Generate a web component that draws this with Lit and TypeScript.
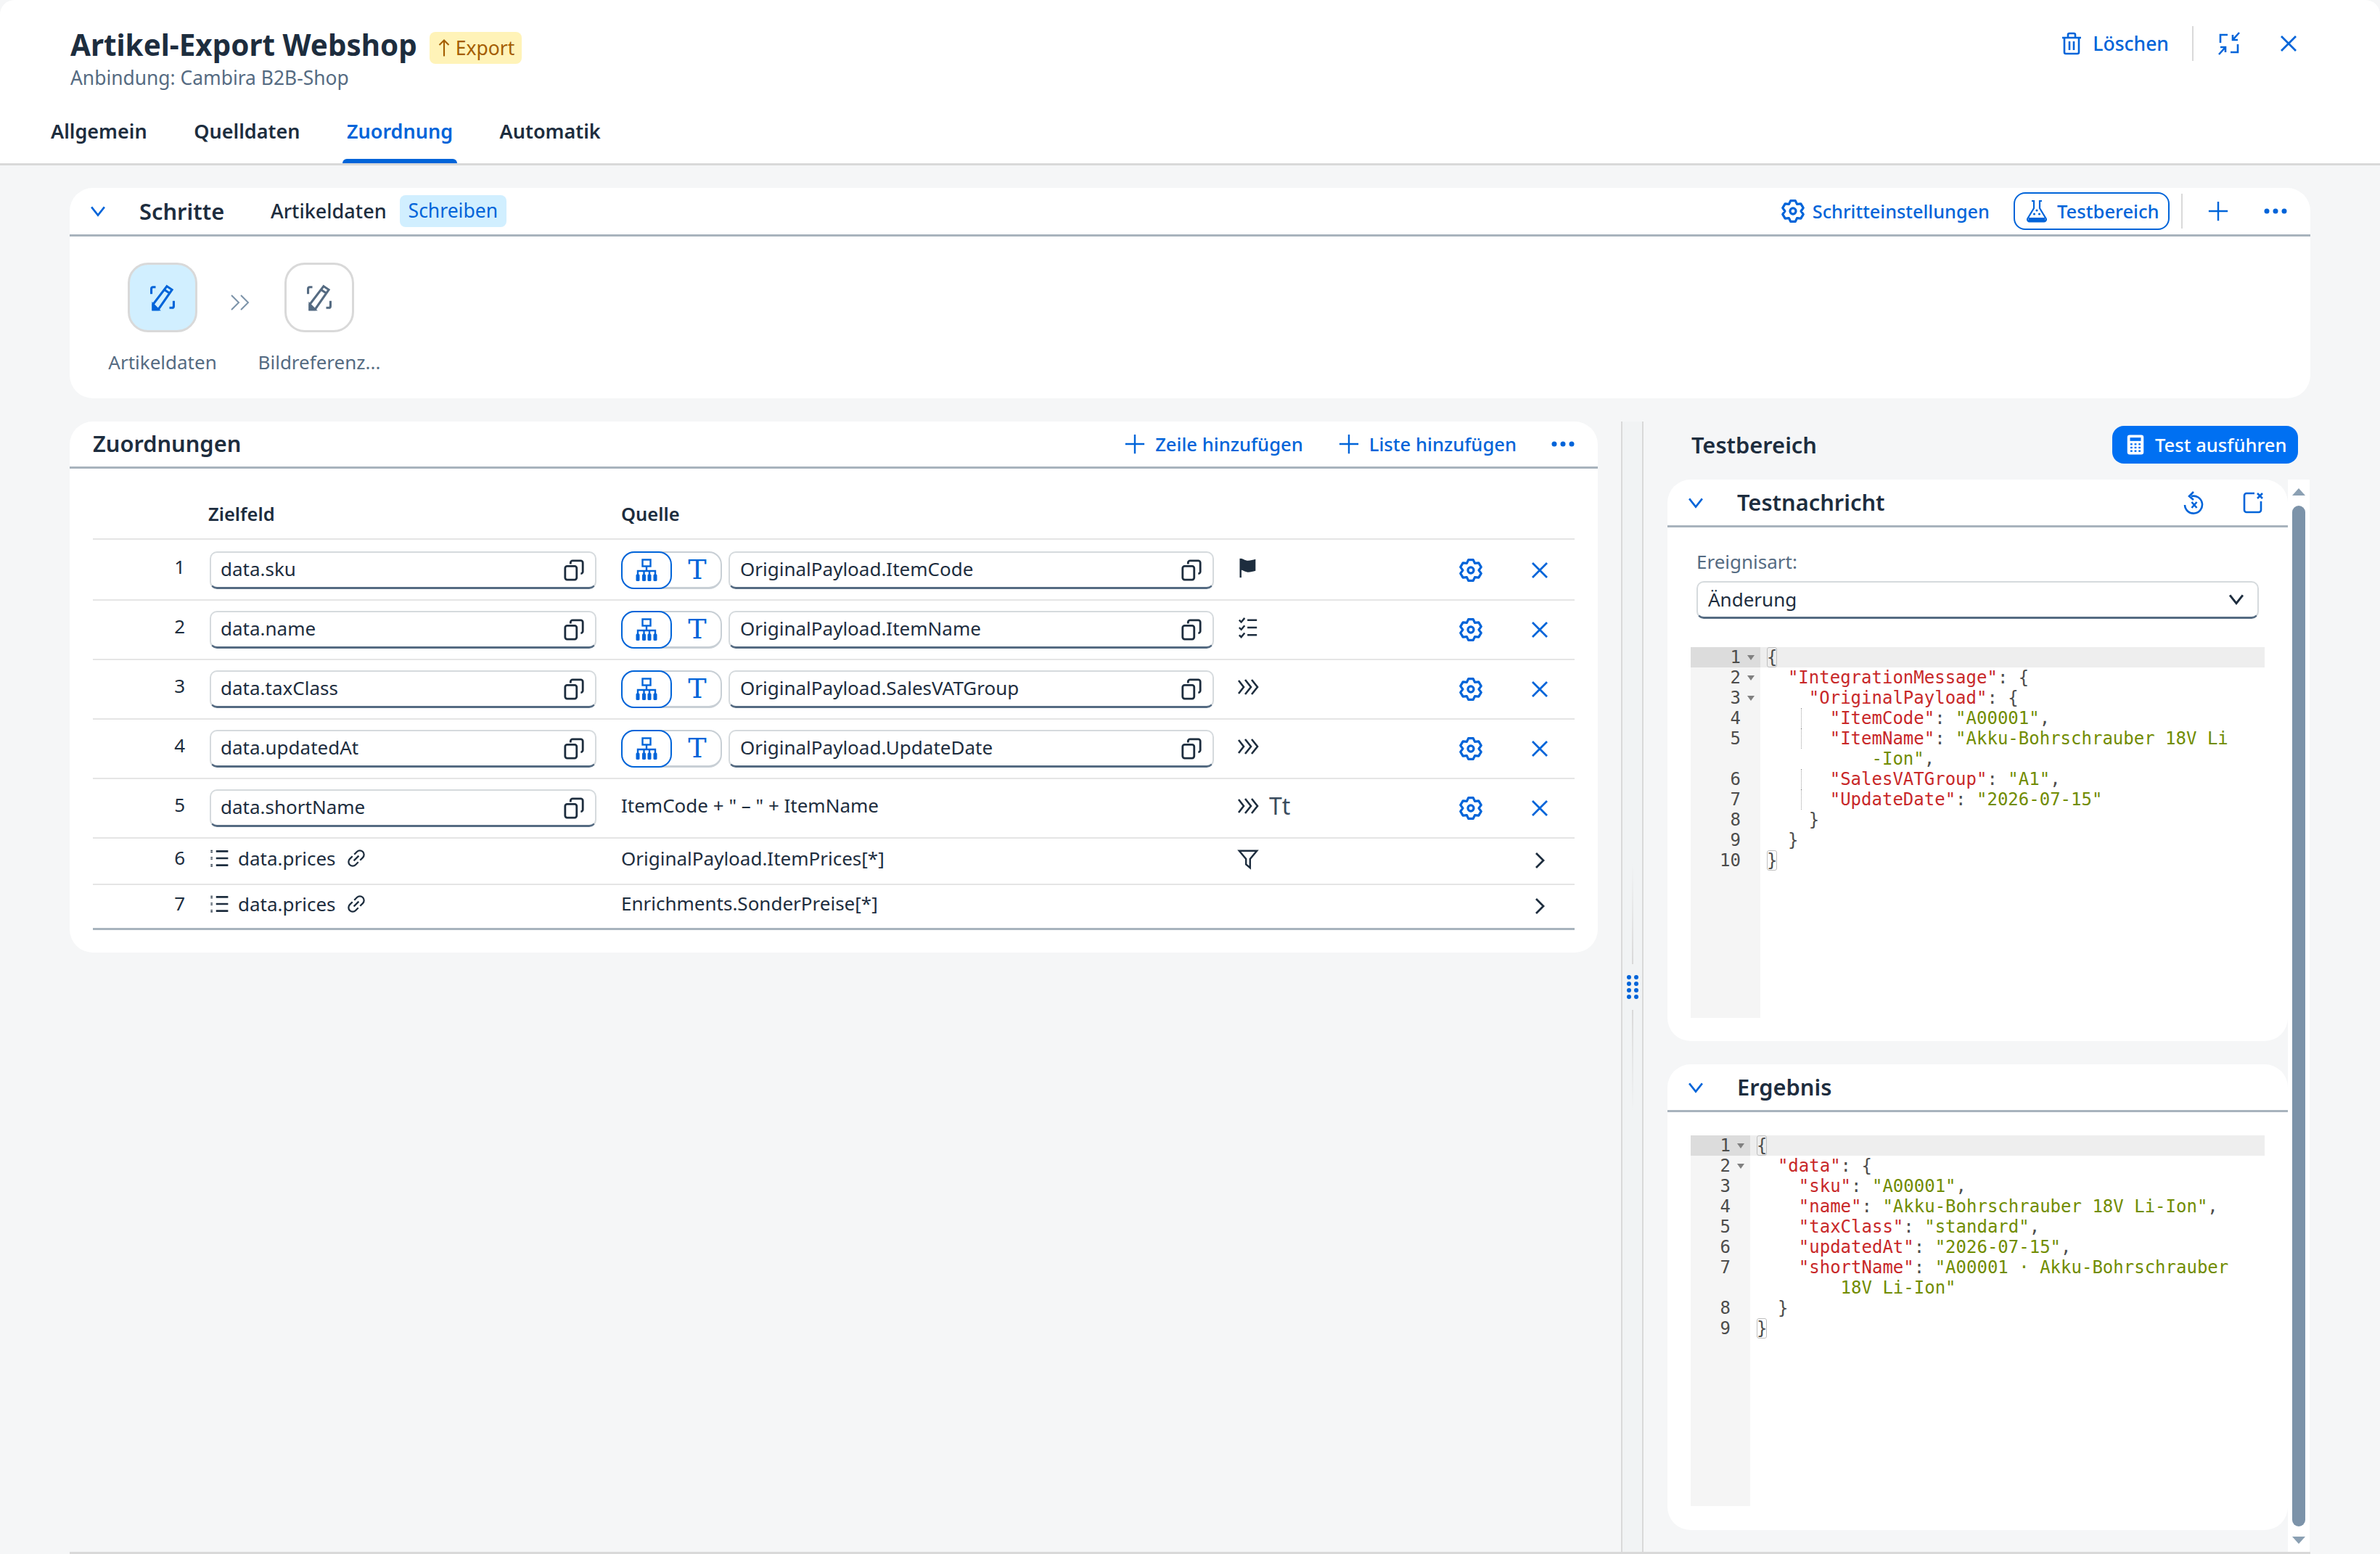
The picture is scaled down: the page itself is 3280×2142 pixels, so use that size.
import { LitElement, html, css, svg } from 'lit'
import { customElement } from 'lit/decorators.js'

// cog outline with six teeth, one pointing straight up
const gearPath = () => {
    const pts: string[] = []
    for (let i = 0; i < 6; i++) {
        const a = (i * 60 - 90) * Math.PI / 180
        const p = (r: number, d: number) => {
            const t = a + d * Math.PI / 180
            return `${(16 + r * Math.cos(t)).toFixed(1)} ${(16 + r * Math.sin(t)).toFixed(1)}`
        }
        pts.push(p(10.4, -30), p(14, -13), p(14, 13))
    }
    return 'M' + pts.join(' L') + ' Z'
}

const ICONS: Record<string, any> = {
    chevDown: svg`<path d="M6.5 10 16 22l9.500-12" />`,
    chevRight: svg`<path d="M11 6l10 10-10 10" />`,
    close: svg`<path d="M6 6l20 20M26 6 6 26" />`,
    plus: svg`<path d="M16 2v28M2 16h28" />`,
    dots: svg`<g fill="currentColor" stroke="none"><circle cx="4" cy="16" r="3.500"/><circle cx="16" cy="16" r="3.500"/><circle cx="28" cy="16" r="3.500"/></g>`,
    arrowUp: svg`<path d="M16 3v27M8 11l8-8 8 8" />`,
    trash: svg`<path d="M3 8h26M11 8V4a2 2 0 0 1 2-2h6a2 2 0 0 1 2 2v4M6 8v20a2 2 0 0 0 2 2h16a2 2 0 0 0 2-2V8M13 13v12M19 13v12" />`,
    exitFull: svg`<path d="M4 15V4h10M28 17v11H18M30 1l-9 10M21 4v7h7M2 31l9-10M11 28v-7H4" />`,
    edit: svg`<path d="M3 12V6a2 2 0 0 1 2-2h3M29 20v6a2 2 0 0 1-2 2h-3M5 30v-6L21 3l6 4-16 23zM18 7l6 4" /><path d="M5 30v-6l6 6z" fill="currentColor" />`,
    chevDouble: svg`<path d="M4 6l10 10L4 26M17 6l10 10-10 10" />`,
    chevTriple: svg`<path d="M2 7l7 9-7 9M11 6l8 10-8 10M20 6l8 10-8 10" />`,
    flask: svg`<path d="M9 2h3v10L3.500 26a3 3 0 0 0 2.500 4.500h20a3 3 0 0 0 2.500-4.500L20 12V2h3" /><path d="M5 25h22l1 5H4z" fill="currentColor" stroke="none"/><g fill="currentColor" stroke="none"><circle cx="16" cy="15" r="1.600"/><circle cx="12.500" cy="20" r="1.600"/><circle cx="19.500" cy="20" r="1.600"/></g>`,
    calc: svg`<rect x="4" y="1.500" width="24" height="29" rx="3.500" fill="currentColor" stroke="none"/><g fill="#0070f2" stroke="none"><rect x="8" y="5.500" width="16" height="5"/><rect x="8.500" y="14" width="3" height="2.500"/><rect x="14.500" y="14" width="3" height="2.500"/><rect x="20.500" y="14" width="3" height="2.500"/><rect x="8.500" y="19" width="3" height="2.500"/><rect x="14.500" y="19" width="3" height="2.500"/><rect x="20.500" y="19" width="3" height="2.500"/><rect x="8.500" y="24" width="3" height="2.500"/><rect x="14.500" y="24" width="3" height="2.500"/><rect x="20.500" y="24" width="3" height="2.500"/></g>`,
    copy: svg`<rect x="3" y="10" width="17" height="20" rx="3"/><path d="M11 7V5a3 3 0 0 1 3-3h12a3 3 0 0 1 3 3v13a3 3 0 0 1-3 3" />`,
    network: svg`<rect x="10.500" y="1.500" width="11" height="9"/><path d="M16 10v7M4 23v-6h24v6M12.500 17v6M20 17v6"/><g fill="currentColor" stroke="none"><rect x="1.500" y="21.500" width="5" height="9.500" rx="1.500"/><rect x="10" y="21.500" width="5" height="9.500" rx="1.500"/><rect x="17.500" y="21.500" width="5" height="9.500" rx="1.500"/><rect x="25.500" y="21.500" width="5" height="9.500" rx="1.500"/></g>`,
    flag: svg`<path d="M5 2v28" /><path d="M5 2c5 0 6 3 11 3 4 0 7-1 11-2v17c-4 1-7 2-11 2-5 0-6-3-11-3z" fill="currentColor" stroke="none"/>`,
    checks: svg`<path d="M3 5l3 3 5-6M15 5h14M3 16l3 3 5-6M15 16h14M3 27l3 3 5-6M15 27h14" />`,
    filter: svg`<path d="M3 4h26L19 16v13l-6-5v-8z" />`,
    list: svg`<path d="M10 5h19M10 16h19M10 27h19" /><path d="M3 3v4M3 14v4M3 25v4" stroke-dasharray="1.500 1"/>`,
    link: svg`<g transform="rotate(-45 16 16)"><path d="M14 9.500H8a6.500 6.500 0 0 0 0 13h6M18 9.500h6a6.500 6.500 0 0 1 0 13h-6M10.500 16h11" /></g>`,
    revert: svg`<path d="M12 7a12 12 0 1 1-9 12M15 1 9 7l6 5M12.500 15l7 8M19.500 15l-7 8" />`,
    clear: svg`<path d="M18 3H7a3 3 0 0 0-3 3v20a3 3 0 0 0 3 3h17a3 3 0 0 0 3-3V14M22 3l7 7M29 3l-7 7" />`,
    gear: svg`<path d="${gearPath()}" stroke-linejoin="round"/><circle cx="16" cy="16" r="3.800"/>`,
}

const icon = (name: string, size = 32, sw = 2.4, cls = '') => html`
    <svg class="i ${cls}" width=${size} height=${size} viewBox="0 0 32 32" fill="none" stroke="currentColor" stroke-width=${sw}>${ICONS[name]}</svg>`

type Tok = [string, string]
type Line = { n: string; t: Tok[]; fold?: boolean; guide?: boolean }

const pair = (indent: string, key: string, value: string, comma = true): Tok[] => [
    ['p', indent], ['k', `"${key}"`], ['p', ': '], ['s', `"${value}"`], ['p', comma ? ',' : ''],
]

const MESSAGE: Line[] = [
    { n: '1', t: [['b', '{']], fold: true },
    { n: '2', t: [['p', '  '], ['k', '"IntegrationMessage"'], ['p', ': {']], fold: true },
    { n: '3', t: [['p', '    '], ['k', '"OriginalPayload"'], ['p', ': {']], fold: true },
    { n: '4', t: pair('      ', 'ItemCode', 'A00001'), guide: true },
    { n: '5', t: [['p', '      '], ['k', '"ItemName"'], ['p', ': '], ['s', '"Akku-Bohrschrauber 18V Li']], guide: true },
    { n: '', t: [['s', '          -Ion"'], ['p', ',']] },
    { n: '6', t: pair('      ', 'SalesVATGroup', 'A1'), guide: true },
    { n: '7', t: pair('      ', 'UpdateDate', '2026-07-15', false), guide: true },
    { n: '8', t: [['p', '    }']] },
    { n: '9', t: [['p', '  }']] },
    { n: '10', t: [['b', '}']] },
]

const RESULT: Line[] = [
    { n: '1', t: [['b', '{']], fold: true },
    { n: '2', t: [['p', '  '], ['k', '"data"'], ['p', ': {']], fold: true },
    { n: '3', t: pair('    ', 'sku', 'A00001') },
    { n: '4', t: pair('    ', 'name', 'Akku-Bohrschrauber 18V Li-Ion') },
    { n: '5', t: pair('    ', 'taxClass', 'standard') },
    { n: '6', t: pair('    ', 'updatedAt', '2026-07-15') },
    { n: '7', t: [['p', '    '], ['k', '"shortName"'], ['p', ': '], ['s', '"A00001 · Akku-Bohrschrauber']] },
    { n: '', t: [['s', '        18V Li-Ion"']] },
    { n: '8', t: [['p', '  }']] },
    { n: '9', t: [['b', '}']] },
]

const ROWS = [
    { n: 1, target: 'data.sku', source: 'OriginalPayload.ItemCode', mark: 'flag' },
    { n: 2, target: 'data.name', source: 'OriginalPayload.ItemName', mark: 'checks' },
    { n: 3, target: 'data.taxClass', source: 'OriginalPayload.SalesVATGroup', mark: 'chevTriple' },
    { n: 4, target: 'data.updatedAt', source: 'OriginalPayload.UpdateDate', mark: 'chevTriple' },
]

@customElement('app-root')
export class AppRoot extends LitElement {
    static styles = css`
        :host {
            display: block;
            width: 3280px;
            height: 2142px;
            overflow: hidden;
            background: #f5f6f7;
            color: #1d2d3e;
            font-family: "Noto Sans", "Liberation Sans", sans-serif;
            font-size: 26px;
        }
        .page { display: flex; flex-direction: column; height: 100%; }
        .i { display: block; flex: none; }
        .blue { color: #0064d9; }

        .top {
            height: 225px;
            background: #fff;
            border-bottom: 3px solid #d9d9d9;
            border-radius: 20px 20px 0 0;
            display: flex;
            flex-direction: column;
            position: relative;
            box-sizing: content-box;
        }
        .top-row { display: flex; justify-content: space-between; padding: 36px 110px 0 97px; height: 102px; }
        .title-line { display: flex; align-items: center; gap: 17px; height: 52px; }
        .title { font-size: 40.400px; font-weight: 700; line-height: 50px; }
        .badge {
            display: flex; align-items: center; gap: 3px;
            height: 44px; padding: 0 10px 0 7px; margin-top: 8px;
            background: #fff3b8; color: #a45d00; border-radius: 8px; font-size: 26.500px;
        }
        .sub { color: #556b82; font-size: 26.400px; line-height: 38px; }
        .top-actions { display: flex; align-items: center; height: 48px; color: #0064d9; }
        .top-actions .del { display: flex; align-items: center; gap: 13px; font-weight: 500; font-size: 26.500px; }
        .sep { width: 2px; background: #d9d9d9; height: 48px; flex: none; }
        .top-actions .sep { margin: 0 33px 0 32px; }
        .gap-close { width: 50px; }
        .tabs { display: flex; padding-left: 70px; height: 89px; }
        .tab { font-weight: 600; line-height: 90px; font-size: 27px; margin-right: 64.500px; position: relative; }
        .tab.on { color: #0064d9; }
        .tab.on::after {
            content: ''; position: absolute; left: -6px; right: -6px; bottom: 0; height: 6px;
            background: #0064d9; border-radius: 6px 6px 0 0;
        }

        .content { flex: 1; min-height: 0; display: flex; flex-direction: column; padding: 31px 96px 0; gap: 32px; }
        .card { background: #fff; border-radius: 32px; }
        .card-head {
            display: flex; align-items: center; height: 64px;
            border-bottom: 3px solid #a8b3bd;
        }

        .steps { height: 290px; flex: none; }
        .steps .card-head { padding: 0 32px 0 24px; }
        .h { font-size: 30.800px; font-weight: 600; }
        .steps .h { margin-left: 42px; width: 181px; }
        .crumb { font-weight: 500; font-size: 27px; margin-top: -1px; }
        .tag {
            margin-left: 18px; height: 44px; padding: 0 12px; line-height: 43px;
            background: #d1efff; color: #0064d9; border-radius: 8px; font-size: 26.500px;
        }
        .spacer { flex: 1; }
        .link { display: flex; align-items: center; color: #0064d9; font-weight: 500; gap: 10px; font-size: 25.300px; }
        .toggle {
            display: flex; align-items: center; gap: 12px; height: 52px; padding: 0 14px 0 14px;
            margin-left: 33px; box-sizing: border-box; width: 215px;
            border: 2px solid #0064d9; border-radius: 16px; color: #0064d9; font-weight: 500; font-size: 25.600px;
        }
        .steps .sep { margin: 0 34px 0 16px; }
        .step-list { display: flex; padding: 36px 0 0 20px; }
        .step { display: flex; flex-direction: column; align-items: center; width: 216px; color: #556b82; }
        .step-box {
            width: 96px; height: 96px; box-sizing: border-box; border-radius: 28px;
            display: flex; align-items: center; justify-content: center;
            border: 3px solid #d9d9d9; background: #fff; color: #556b82;
        }
        .step-box.on { background: #d1efff; color: #0064d9; }
        .step label { margin-top: 22px; line-height: 38px; white-space: nowrap; }
        .step-wrap { position: relative; display: flex; }
        .step-arrow { position: absolute; left: 199px; top: 39px; color: #7c93a9; }

        .split { flex: 1; min-height: 0; display: flex; border-bottom: 3px solid #d9d9d9; }
        .left { width: 2106px; flex: none; }
        .map { height: 732px; }
        .map .card-head { padding: 0 32px; height: 62px; }
        .map .h { margin-top: -2px; }
        .add { margin-right: 48px; gap: 13px; font-size: 25.600px; }
        .table { padding: 0 32px; }
        .grid {
            display: grid;
            grid-template-columns: 161px 567px 849px 290px 64px 111px;
            align-items: center;
        }
        .thead { height: 96px; border-bottom: 2px solid #e5e5e5; margin-bottom: 2px; font-weight: 600; font-size: 25.500px; align-items: end; }
        .thead > div { padding-bottom: 15px; line-height: 38px; }
        .thead > div:nth-child(2) { margin-left: -2px; }
        .row { height: 80px; border-bottom: 2px solid #e5e5e5; }
        .row.sub-row { height: 62px; }
        .row.last { height: 59px; border-bottom: 3px solid #a8b3bd; }
        .num { text-align: right; padding-right: 34px; padding-bottom: 10px; }
        .target { padding-right: 34px; }
        .src { display: flex; gap: 9px; padding-right: 32px; }
        .txt { padding-bottom: 9px; white-space: nowrap; }
        .field {
            height: 52px; flex: 1; box-sizing: border-box; display: flex; align-items: center;
            justify-content: space-between; padding: 0 14px 3px 13px;
            background: #fff; border: 2px solid #d5dadd; border-bottom: 3px solid #556b82; border-radius: 10px;
            white-space: nowrap;
        }
        .src .field { padding-left: 14px; }
        .field .i { margin-top: 3px; }
        .seg {
            width: 139px; height: 52px; box-sizing: border-box; flex: none; display: flex;
            border: 2px solid #c8cfd5; border-bottom-width: 3px; border-radius: 18px; position: relative;
        }
        .seg-on {
            width: 70px; height: 52px; box-sizing: border-box; margin: -2px 0 -3px -2px;
            border: 2px solid #0064d9; border-radius: 18px; color: #0064d9; background: #fff;
            display: flex; align-items: center; justify-content: center;
        }
        .seg-t {
            flex: 1; text-align: center; color: #0064d9; line-height: 46px; padding-left: 3px;
            font-family: "DejaVu Serif", serif; font-size: 38px;
        }
        .mark { display: flex; align-items: center; gap: 12px; padding-bottom: 6px; }
        .mark .tt { font-size: 32px; line-height: 34px; color: #3a4c5e; }
        .act { display: flex; justify-content: center; color: #0064d9; }
        .x { justify-content: flex-start; padding-left: 47px; }
        .list-target { display: flex; align-items: center; gap: 14px; padding-bottom: 8px; }
        .list-icon { margin-right: -3px; }
        .row.sub-row .x, .row.last .x { padding-bottom: 2px; }

        .splitter {
            width: 31px; flex: none; box-sizing: border-box; margin-left: 32px;
            background: #f1f3f4; border-left: 2px solid #d9d9d9; border-right: 2px solid #d9d9d9;
            display: flex; flex-direction: column; align-items: center; justify-content: center; gap: 15px;
        }
        .grip-line { width: 2px; height: 140px; }
        .grip-line.up { background: linear-gradient(to top, #d9d9d9, transparent); }
        .grip-line.down { background: linear-gradient(to bottom, #d9d9d9, transparent); }
        .grip { display: grid; grid-template-columns: 6px 6px; gap: 3px 4px; }
        .grip i { width: 6px; height: 6px; border-radius: 50%; background: #0064d9; }

        .right { flex: 1; min-width: 0; display: flex; flex-direction: column; padding-left: 33px; }
        .right-head { height: 80px; flex: none; display: flex; align-items: center; justify-content: space-between; padding: 0 17px 0 33px; box-sizing: border-box; }
        .right-head .h { margin-top: -16px; }
        .run {
            height: 52px; margin-top: -16px; width: 256px; box-sizing: border-box; padding-left: 17px;
            display: flex; align-items: center; gap: 12px; color: #fff; background: #0070f2; border-radius: 16px; font-size: 25.600px; font-weight: 500;
        }
        .scroll-area { flex: 1; min-height: 0; display: flex; }
        .panels { width: 855px; flex: none; display: flex; flex-direction: column; gap: 32px; }
        .panel { border-radius: 32px; }
        .panel .card-head { padding: 0 32px 0 24px; height: 63px; border-radius: 32px 32px 0 0; }
        .panel .h { margin: -2px 0 0 42px; flex: 1; }
        .msg { height: 774px; }
        .res { height: 642px; }
        .form { padding: 28px 40px 0; }
        .form label { display: block; color: #556b82; line-height: 38px; }
        .select {
            height: 52px; box-sizing: border-box; margin-top: 8px; display: flex; align-items: center; justify-content: space-between;
            padding: 0 14px 2px 14px; border: 2px solid #d5dadd; border-bottom: 3px solid #556b82; border-radius: 10px;
        }
        .editor { margin: 0 32px; display: flex; font: 24px/28px "DejaVu Sans Mono", monospace; color: #4d4d4c; }
        .msg .editor { margin-top: 39px; height: 511px; }
        .res .editor { margin-top: 32px; height: 511px; }
        .gutter { flex: none; background: #f5f5f5; color: #4d4d4c; }
        .msg .gutter { width: 96px; }
        .res .gutter { width: 82px; }
        .gut-cell { height: 28px; position: relative; text-align: right; padding-right: 27px; }
        .gut-cell.active { background: #dcdcdc; }
        .fold { position: absolute; right: 8px; top: 11px; border: 5px solid transparent; border-top: 7px solid #808080; border-bottom: 0; }
        .code { flex: 1; min-width: 0; }
        .line { height: 28px; padding-left: 9px; white-space: pre; position: relative; }
        .line.active { background: #eee; }
        .k { color: #c82829; }
        .s { color: #718c00; }
        .b { display: inline-block; height: 28px; vertical-align: top; outline: 1px solid #bfbfbf; outline-offset: -1px; border-radius: 3px; }
        .guide { position: absolute; left: 56px; top: 0; bottom: 0; border-left: 1px dotted #a0a0a0; }

        .scrollbar {
            width: 30px; flex: none; background: #fff; display: flex; flex-direction: column; align-items: center;
            padding: 12px 0 11px; box-sizing: border-box;
        }
        .arrow-up { border: 9px solid transparent; border-bottom: 10px solid #8ba0b3; border-top: 0; }
        .arrow-down { border: 9px solid transparent; border-top: 10px solid #8ba0b3; border-bottom: 0; }
        .thumb { flex: 1; width: 18px; background: #7c93a9; border-radius: 9px; margin: 14px 0 14px; }
        .mr-49 { margin-right: 49px; }
        .ml-48 { margin-left: 48px; }
        .plain { color: #1d2d3e; }
    `

    private renderEditor(lines: Line[]) {
        return html`
            <div class="editor">
                <div class="gutter">
                    ${lines.map((l, i) => html`
                        <div class="gut-cell ${i === 0 ? 'active' : ''}">${l.n}${l.fold ? html`<span class="fold"></span>` : ''}</div>`)}
                </div>
                <div class="code">
                    ${lines.map((l, i) => html`
                        <div class="line ${i === 0 ? 'active' : ''}">${l.guide ? html`<span class="guide"></span>` : ''}${l.t.map(([c, t]) => html`<span class=${c}>${t}</span>`)}</div>`)}
                </div>
            </div>`
    }

    private renderRow(r: { n: number; target: string; source?: string; expr?: string; mark: string; tt?: boolean }) {
        return html`
            <div class="grid row">
                <div class="num">${r.n}</div>
                <div class="target"><div class="field">${r.target}${icon('copy', 30, 3)}</div></div>
                <div class="src">
                    ${r.source
                        ? html`<div class="seg"><div class="seg-on">${icon('network', 32, 2.4)}</div><div class="seg-t">T</div></div>
                               <div class="field">${r.source}${icon('copy', 30, 3)}</div>`
                        : html`<div class="txt">${r.expr}</div>`}
                </div>
                <div class="mark">${icon(r.mark, r.mark === 'chevTriple' ? 32 : 30, 2.6)}${r.tt ? html`<span class="tt">Tt</span>` : ''}</div>
                <div class="act">${icon('gear', 34, 3)}</div>
                <div class="act x">${icon('close', 32, 2.8)}</div>
            </div>`
    }

    private renderListRow(n: number, source: string, filter: boolean, last: boolean) {
        return html`
            <div class="grid row ${last ? 'last' : 'sub-row'}">
                <div class="num">${n}</div>
                <div class="list-target">${icon('list', 28, 3, 'list-icon')}<span>data.prices</span>${icon('link', 28, 2.6)}</div>
                <div class="txt">${source}</div>
                <div class="mark">${filter ? icon('filter', 30, 2.6) : ''}</div>
                <div></div>
                <div class="act x plain">${icon('chevRight', 32, 2.8)}</div>
            </div>`
    }

    render() {
        return html`
            <div class="page">
                <header class="top">
                    <div class="top-row">
                        <div>
                            <div class="title-line">
                                <div class="title">Artikel-Export Webshop</div>
                                <div class="badge">${icon('arrowUp', 26, 2.6)}Export</div>
                            </div>
                            <div class="sub">Anbindung: Cambira B2B-Shop</div>
                        </div>
                        <div class="top-actions">
                            <div class="del">${icon('trash', 32, 2.6)}Löschen</div>
                            <div class="sep"></div>
                            ${icon('exitFull', 32, 2.6)}
                            <div class="gap-close"></div>
                            ${icon('close', 32, 2.8)}
                        </div>
                    </div>
                    <nav class="tabs">
                        <div class="tab">Allgemein</div>
                        <div class="tab">Quelldaten</div>
                        <div class="tab on">Zuordnung</div>
                        <div class="tab">Automatik</div>
                    </nav>
                </header>

                <main class="content">
                    <section class="card steps">
                        <div class="card-head">
                            <span class="blue">${icon('chevDown', 30, 2.8)}</span>
                            <div class="h">Schritte</div>
                            <div class="crumb">Artikeldaten</div>
                            <div class="tag">Schreiben</div>
                            <div class="spacer"></div>
                            <div class="link">${icon('gear', 34, 3)}Schritteinstellungen</div>
                            <div class="toggle">${icon('flask', 32, 2.2)}Testbereich</div>
                            <div class="sep"></div>
                            <span class="blue">${icon('plus', 30, 2.6)}</span>
                            <span class="blue ml-48">${icon('dots', 32)}</span>
                        </div>
                        <div class="step-list">
                            <div class="step-wrap">
                                <div class="step">
                                    <div class="step-box on">${icon('edit', 38, 2.6)}</div>
                                    <label>Artikeldaten</label>
                                </div>
                                <div class="step-arrow">${icon('chevDouble', 32, 2)}</div>
                            </div>
                            <div class="step">
                                <div class="step-box">${icon('edit', 38, 2.6)}</div>
                                <label>Bildreferenz...</label>
                            </div>
                        </div>
                    </section>

                    <div class="split">
                        <div class="left">
                            <section class="card map">
                                <div class="card-head">
                                    <div class="h">Zuordnungen</div>
                                    <div class="spacer"></div>
                                    <div class="link add">${icon('plus', 30, 2.6)}Zeile hinzufügen</div>
                                    <div class="link add">${icon('plus', 30, 2.6)}Liste hinzufügen</div>
                                    <span class="blue">${icon('dots', 32)}</span>
                                </div>
                                <div class="table">
                                    <div class="grid thead">
                                        <div></div><div>Zielfeld</div><div>Quelle</div><div></div><div></div><div></div>
                                    </div>
                                    ${ROWS.map(r => this.renderRow(r))}
                                    ${this.renderRow({ n: 5, target: 'data.shortName', expr: 'ItemCode + " – " + ItemName', mark: 'chevTriple', tt: true })}
                                    ${this.renderListRow(6, 'OriginalPayload.ItemPrices[*]', true, false)}
                                    ${this.renderListRow(7, 'Enrichments.SonderPreise[*]', false, true)}
                                </div>
                            </section>
                        </div>

                        <div class="splitter">
                            <div class="grip-line up"></div>
                            <div class="grip">${[0, 1, 2, 3, 4, 5, 6, 7].map(() => html`<i></i>`)}</div>
                            <div class="grip-line down"></div>
                        </div>

                        <aside class="right">
                            <div class="right-head">
                                <div class="h">Testbereich</div>
                                <div class="run">${icon('calc', 30)}Test ausführen</div>
                            </div>
                            <div class="scroll-area">
                                <div class="panels">
                                    <section class="card panel msg">
                                        <div class="card-head">
                                            <span class="blue">${icon('chevDown', 30, 2.8)}</span>
                                            <div class="h">Testnachricht</div>
                                            <span class="blue mr-49">${icon('revert', 32, 2.6)}</span>
                                            <span class="blue">${icon('clear', 32, 2.6)}</span>
                                        </div>
                                        <div class="form">
                                            <label>Ereignisart:</label>
                                            <div class="select">Änderung${icon('chevDown', 30, 3.2)}</div>
                                        </div>
                                        ${this.renderEditor(MESSAGE)}
                                    </section>
                                    <section class="card panel res">
                                        <div class="card-head">
                                            <span class="blue">${icon('chevDown', 30, 2.8)}</span>
                                            <div class="h">Ergebnis</div>
                                        </div>
                                        ${this.renderEditor(RESULT)}
                                    </section>
                                </div>
                                <div class="scrollbar">
                                    <div class="arrow-up"></div>
                                    <div class="thumb"></div>
                                    <div class="arrow-down"></div>
                                </div>
                            </div>
                        </aside>
                    </div>
                </main>
            </div>
        `
    }
}

declare global {
    interface HTMLElementTagNameMap {
        'app-root': AppRoot
    }
}
